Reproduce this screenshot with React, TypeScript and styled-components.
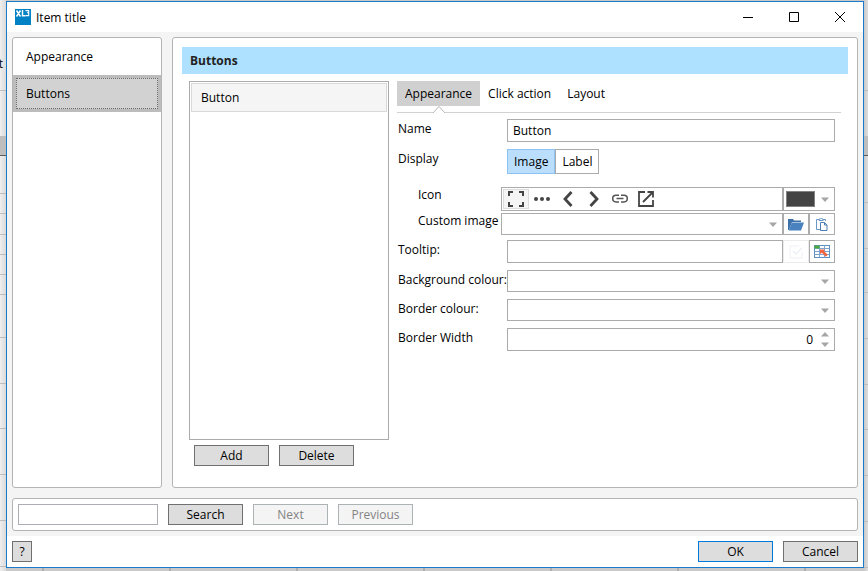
import React, { useState } from "react";
import styled, { createGlobalStyle, css } from "styled-components";

const GlobalStyle = createGlobalStyle`
  *, *::before, *::after { box-sizing: border-box; }
  body { margin: 0; background: #e4e4e4; }
  body, button, input, select {
    font-family: "Open Sans", "Noto Sans", sans-serif;
    font-size: 12px;
    color: #000;
  }
  button, input, select { margin: 0; padding: 0; border-radius: 0; }
`;

const line = "#ababab";
const panelLine = "#b4b4b4";

/* ---------- desktop behind the dialog ---------- */

const Desktop = styled.div`
  display: grid;
  grid-template-columns: 6px minmax(0, 1fr) 4px;
  grid-template-rows: 1px minmax(0, 1fr) 3px;
  min-height: 100vh;
  background: #c9c9c9;
`;

const SheetEdge = styled.div<{ $side: "left" | "right" }>`
  grid-row: 1 / -1;
  grid-column: ${(p) => (p.$side === "left" ? 1 : 3)};
  overflow: hidden;
  line-height: 16px;
  background: ${(p) =>
    p.$side === "left"
      ? "linear-gradient(to right, #efefef, #dadada)"
      : "linear-gradient(to right, #cacaca, #dedede)"};
`;

const SheetCell = styled.div<{ $height: number; $header?: boolean }>`
  display: flex;
  align-items: flex-end;
  justify-content: flex-end;
  height: ${(p) => p.$height}px;
  padding: 0 3px 18px 0;
  border-bottom: ${(p) => (p.$header ? "1px solid #5c5c5c" : "1px solid #bdbdbd")};
  background: ${(p) => (p.$header ? "#bebebe" : "transparent")};
`;

const SheetFooter = styled.div`
  grid-row: 3;
  grid-column: 2;
  background: repeating-linear-gradient(
    to right,
    #c9c9c9 0 36px,
    #adadad 36px 38px,
    #c9c9c9 38px 127px
  );
`;

/* ---------- dialog frame ---------- */

const Dialog = styled.main`
  grid-row: 2;
  grid-column: 2;
  display: flex;
  flex-direction: column;
  border: 1px solid #1979ca;
  background: #fff;
`;

const TitleBar = styled.header`
  display: flex;
  align-items: center;
  height: 30px;
  padding-left: 8px;
`;

const Title = styled.h1`
  flex: 1;
  margin: 0 0 0 5px;
  font-size: 12px;
  font-weight: 400;
`;

const WindowButton = styled.button`
  display: grid;
  place-items: center;
  width: 46px;
  height: 28px;
  border: 0;
  background: transparent;
`;

const Body = styled.div`
  flex: 1;
  display: flex;
  flex-direction: column;
  gap: 10px;
  padding: 5px;
  background: #f4f4f4;
`;

const Columns = styled.div`
  flex: 1;
  display: flex;
  gap: 10px;
`;

const panel = css`
  border: 1px solid ${panelLine};
  border-radius: 3px;
  background: #fff;
`;

const Sidebar = styled.nav`
  ${panel}
  width: 150px;
  flex: none;
`;

const NavItem = styled.button<{ $active: boolean }>`
  display: block;
  width: 100%;
  height: 37px;
  padding: 3px;
  border: 0;
  background: ${(p) => (p.$active ? "#bcbcbc" : "transparent")};
  text-align: left;
`;

const NavLabel = styled.span<{ $active: boolean }>`
  display: flex;
  align-items: center;
  height: 31px;
  padding-left: 9px;
  border: 1px dotted ${(p) => (p.$active ? "#6b6b6b" : "transparent")};
  background: ${(p) => (p.$active ? "#d2d2d2" : "transparent")};
`;

const Content = styled.section`
  ${panel}
  flex: 1;
  min-width: 0;
  display: flex;
  flex-direction: column;
  gap: 7px;
  padding: 9px 9px 21px;
`;

const Banner = styled.h2`
  display: flex;
  align-items: center;
  height: 27px;
  margin: 0;
  padding-left: 8px;
  background: #ade1ff;
  color: #222;
  font-size: 12px;
  font-weight: 700;
`;

const Workspace = styled.div`
  flex: 1;
  display: flex;
  gap: 8px;
  padding: 0 7px;
`;

const ListColumn = styled.div`
  display: flex;
  flex-direction: column;
  gap: 5px;
  width: 200px;
  flex: none;
`;

const ItemList = styled.div`
  flex: 1;
  padding: 1px;
  border: 1px solid ${line};
`;

const ListItem = styled.button`
  width: 100%;
  height: 29px;
  padding-left: 9px;
  border: 1px solid #d9d9d9;
  background: #f5f5f5;
  text-align: left;
`;

const ButtonRow = styled.div`
  display: flex;
  gap: 10px;
  padding-left: 5px;
`;

const PushButton = styled.button<{ $primary?: boolean; $small?: boolean }>`
  width: ${(p) => (p.$small ? 20 : 75)}px;
  height: 21px;
  border: 1px solid ${(p) => (p.$primary ? "#0078d7" : "#707070")};
  background: #ddd;
  line-height: 19px;

  &:disabled {
    border-color: #adb2b5;
    background: #f4f4f4;
    color: #838383;
  }
`;

/* ---------- settings form ---------- */

const Settings = styled.form`
  flex: 1;
  min-width: 0;
`;

const TabBar = styled.div`
  display: flex;
  height: 32px;
  border-bottom: 1px solid #d2d2d2;
  margin-bottom: 6px;
`;

const Tab = styled.button<{ $active: boolean }>`
  position: relative;
  height: 25px;
  padding: 0 8px;
  border: 0;
  background: ${(p) => (p.$active ? "#d0d0d0" : "transparent")};
`;

const TabPointer = styled.svg`
  position: absolute;
  top: 25px;
  left: calc(50% - 6px);
`;

const Row = styled.div<{ $gap: number; $nested?: boolean }>`
  display: grid;
  grid-template-columns: ${(p) => (p.$nested ? 103 : 109)}px minmax(0, 1fr);
  margin: 0 6px ${(p) => p.$gap}px 1px;
`;

const RowLabel = styled.label<{ $nested?: boolean }>`
  padding-left: ${(p) => (p.$nested ? 20 : 0)}px;
  line-height: ${(p) => (p.$nested ? 16 : 20)}px;
  white-space: nowrap;
`;

const TextInput = styled.input`
  width: 100%;
  min-width: 0;
  height: 23px;
  padding: 0 5px;
  border: 1px solid ${line};
  background: #fff;
  outline: 0;
`;

const Group = styled.div`
  display: flex;
`;

const Toggle = styled.button<{ $active: boolean }>`
  height: 25px;
  padding: 0 6px;
  border: 1px solid ${(p) => (p.$active ? "#8dc3f2" : line)};
  background: ${(p) => (p.$active ? "#badefb" : "#fff")};
`;

const IconStrip = styled.div`
  flex: 1;
  display: flex;
  height: 24px;
  padding: 1px;
  border: 1px solid ${line};
`;

const IconOption = styled.button<{ $active: boolean }>`
  display: grid;
  place-items: center;
  width: 26px;
  height: 20px;
  border: 1px solid ${(p) => (p.$active ? "#dcdcdc" : "transparent")};
  background: ${(p) => (p.$active ? "#f5f5f5" : "transparent")};
`;

const ColourButton = styled.button`
  display: flex;
  align-items: center;
  justify-content: space-between;
  width: 52px;
  height: 24px;
  padding: 0 5px 0 2px;
  border: 1px solid ${line};
  background: #fff;
`;

const Swatch = styled.span`
  width: 29px;
  height: 16px;
  border: 1px solid #828282;
  background: #444;
`;

const SelectFrame = styled.div`
  flex: 1;
  display: grid;
  align-items: center;

  > * { grid-area: 1 / 1; }
  > svg { justify-self: end; margin-right: 6px; pointer-events: none; }
`;

const Select = styled.select`
  appearance: none;
  width: 100%;
  height: 22px;
  padding: 0 20px 0 5px;
  border: 1px solid ${line};
  background: #fff;
  outline: 0;
`;

const ToolButton = styled.button<{ $tall?: boolean }>`
  display: grid;
  place-items: center;
  flex: none;
  width: 26px;
  height: ${(p) => (p.$tall ? 23 : 22)}px;
  border: 1px solid ${line};
  background: #fff;

  &:disabled { border-color: #ececec; }
`;

const Spinner = styled.div`
  display: flex;
  height: 23px;
  border: 1px solid ${line};
`;

const SpinInput = styled.input`
  flex: 1;
  min-width: 0;
  padding-right: 3px;
  border: 0;
  outline: 0;
  text-align: right;
`;

const SpinButtons = styled.div`
  display: grid;
  width: 18px;
  padding: 1px 0;
`;

const SpinButton = styled.button`
  display: grid;
  place-items: center;
  border: 0;
  background: transparent;
`;

/* ---------- bottom bars ---------- */

const SearchBar = styled.form`
  ${panel}
  display: flex;
  align-items: flex-start;
  gap: 10px;
  height: 33px;
  padding: 5px;
`;

const SearchInput = styled.input`
  width: 140px;
  height: 21px;
  padding: 0 4px;
  border: 1px solid #abadb3;
  outline: 0;
`;

const Footer = styled.footer`
  display: flex;
  gap: 10px;
  height: 31px;
  padding: 5px;
`;

const Spacer = styled.div`
  flex: 1;
`;

/* ---------- drawings ---------- */

const AppLogo = () => (
  <svg width="16" height="16" viewBox="0 0 16 16" aria-hidden="true">
    <rect width="16" height="16" fill="#0082c4" />
    <path d="M1.500 1.500l4 6M5.500 1.500l-4 6M7.500 1v5.800h3" fill="none" stroke="#fff" strokeWidth="1.500" />
    <path d="M10.500 1.600h3.200v2h-1.500 1.500v3h-3.200" fill="none" stroke="#fff" strokeWidth="1.100" />
  </svg>
);

const Caret = ({ up = false }: { up?: boolean }) => (
  <svg width="8" height="5" viewBox="0 0 8 5" aria-hidden="true">
    <path d={up ? "M0 4.500h8L4 0z" : "M0 0.500h8L4 5z"} fill="#a6a6a6" />
  </svg>
);

const iconShapes: Record<string, React.ReactNode> = {
  Fullscreen: (
    <path d="M2 6V2h4M12 2h4v4M16 12v4h-4M6 16H2v-4" stroke="#444" strokeWidth="2" fill="none" />
  ),
  More: (
    <g fill="#444">
      <circle cx="3" cy="9" r="2" />
      <circle cx="9" cy="9" r="2" />
      <circle cx="15" cy="9" r="2" />
    </g>
  ),
  Back: <path d="M12.500 2L6 9l6.500 7" stroke="#444" strokeWidth="2.800" fill="none" />,
  Forward: <path d="M5.500 2L12 9l-6.500 7" stroke="#444" strokeWidth="2.800" fill="none" />,
  Link: (
    <path
      d="M8 5.300H5a3.300 3.300 0 0 0 0 6.600h3M10 5.300h3a3.300 3.300 0 0 1 0 6.600h-3M5.500 8.600h7"
      stroke="#555"
      strokeWidth="1.500"
      fill="none"
    />
  ),
  Open: (
    <path
      d="M8 2H2v14h14v-6M10.500 2H16v5.500M16 2L6 12"
      stroke="#444"
      strokeWidth="1.800"
      fill="none"
    />
  ),
};

const FolderIcon = () => (
  <svg width="16" height="13" viewBox="0 0 16 13" aria-hidden="true">
    <path d="M0 12V1h5l1 1.500h7V4H4L1 12z" fill="#3d71aa" />
    <path d="M3.800 4.500H16L13 12.500H0.800z" fill="#4a82bf" />
  </svg>
);

const PasteIcon = () => (
  <svg width="12" height="14" viewBox="0 0 12 14" aria-hidden="true">
    <path d="M4 12.500H0.500V2.500h9V4" fill="none" stroke="#6796c4" />
    <path d="M3 3.500V2h1.200a1 1 0 0 1 1.800 0h1.200v1.500z" fill="#fff" stroke="#6796c4" />
    <path d="M4.500 5.500h4l2.500 2.500v5.500H4.500z" fill="#fff" stroke="#4a7fb5" />
    <path d="M8.500 5.500V8H11" fill="none" stroke="#4a7fb5" />
  </svg>
);

const CheckIcon = () => (
  <svg width="14" height="14" viewBox="0 0 14 14" fill="none" stroke="#edf0f5" aria-hidden="true">
    <path d="M10 1H1v12h12V7" />
    <path d="M4 6l3 3 6-6" strokeWidth="1.500" />
  </svg>
);

const SheetIcon = () => (
  <svg width="16" height="13" viewBox="0 0 16 13" aria-hidden="true">
    <rect x="0.500" y="0.500" width="15" height="12" fill="#fff" stroke="#5a8fc4" />
    <path d="M0.500 3.500h15M0.500 6.500h15M0.500 9.500h15M5.500 0.500v12M10.500 0.500v12" stroke="#7ba5d0" />
    <rect x="0.500" y="0.500" width="5" height="3" fill="#4cab3c" />
    <path d="M6 4.500h5L9.800 5.900l4 3.900-1.900 1.900-4-4L6 9z" fill="#f4633e" />
  </svg>
);

const leftCells = [91, 46, 19, 38, 20, 21, 20, 20, 20, 43, 46, 45, 46, 46, 46];
const rightCells = [91, 46, 19, 47, 46, 44, 46, 46, 45, 46, 46, 46];
const sections = ["Appearance", "Buttons"];
const tabs = ["Appearance", "Click action", "Layout"];
const displays = ["Image", "Label"];

export default function App() {
  const [section, setSection] = useState("Buttons");
  const [tab, setTab] = useState("Appearance");
  const [display, setDisplay] = useState("Image");
  const [icon, setIcon] = useState("Fullscreen");
  const [name, setName] = useState("Button");
  const [borderWidth, setBorderWidth] = useState("0");
  const step = (by: number) =>
    setBorderWidth((value) => String(Math.max(0, (Number(value) || 0) + by)));

  return (
    <>
      <GlobalStyle />
      <Desktop>
        <SheetEdge $side="left">
          {leftCells.map((height, i) => (
            <SheetCell key={i} $height={height} $header={i === 2}>
              {i === 0 ? "t" : null}
            </SheetCell>
          ))}
        </SheetEdge>
        <Dialog>
          <TitleBar>
            <AppLogo />
            <Title>Item title</Title>
            <WindowButton type="button" aria-label="Minimise">
              <svg width="10" height="10"><path d="M0 5.500h10" stroke="#000" /></svg>
            </WindowButton>
            <WindowButton type="button" aria-label="Maximise">
              <svg width="10" height="10"><path d="M0.500 0.500h9v9h-9z" fill="none" stroke="#000" /></svg>
            </WindowButton>
            <WindowButton type="button" aria-label="Close">
              <svg width="10" height="10"><path d="M0 0l10 10M10 0L0 10" stroke="#000" /></svg>
            </WindowButton>
          </TitleBar>

          <Body>
            <Columns>
              <Sidebar>
                {sections.map((item) => (
                  <NavItem key={item} type="button" $active={item === section} onClick={() => setSection(item)}>
                    <NavLabel $active={item === section}>{item}</NavLabel>
                  </NavItem>
                ))}
              </Sidebar>

              <Content>
                <Banner>Buttons</Banner>
                <Workspace>
                  <ListColumn>
                    <ItemList>
                      <ListItem type="button">{name}</ListItem>
                    </ItemList>
                    <ButtonRow>
                      <PushButton type="button">Add</PushButton>
                      <PushButton type="button">Delete</PushButton>
                    </ButtonRow>
                  </ListColumn>

                  <Settings onSubmit={(e) => e.preventDefault()}>
                    <TabBar role="tablist">
                      {tabs.map((item) => (
                        <Tab
                          key={item}
                          type="button"
                          role="tab"
                          aria-selected={item === tab}
                          $active={item === tab}
                          onClick={() => setTab(item)}
                        >
                          {item}
                          {item === tab && (
                            <TabPointer width="12" height="8" viewBox="0 0 12 8">
                              <path d="M0 7L6 0.500l6 6.500v1H0z" fill="#fff" />
                              <path d="M0 7L6 0.500L12 7" fill="none" stroke="#b8b8b8" />
                            </TabPointer>
                          )}
                        </Tab>
                      ))}
                    </TabBar>

                    <Row $gap={7}>
                      <RowLabel htmlFor="name">Name</RowLabel>
                      <TextInput id="name" value={name} onChange={(e) => setName(e.target.value)} />
                    </Row>
                    <Row $gap={13}>
                      <RowLabel as="span" id="display">Display</RowLabel>
                      <Group role="group" aria-labelledby="display">
                        {displays.map((item) => (
                          <Toggle
                            key={item}
                            type="button"
                            aria-pressed={item === display}
                            $active={item === display}
                            onClick={() => setDisplay(item)}
                          >
                            {item}
                          </Toggle>
                        ))}
                      </Group>
                    </Row>
                    <Row $gap={2} $nested>
                      <RowLabel as="span" id="icon" $nested>Icon</RowLabel>
                      <Group role="group" aria-labelledby="icon">
                        <IconStrip>
                          {Object.entries(iconShapes).map(([key, shape]) => (
                            <IconOption
                              key={key}
                              type="button"
                              aria-label={key}
                              $active={key === icon}
                              onClick={() => setIcon(key)}
                            >
                              <svg width="18" height="18" viewBox="0 0 18 18">{shape}</svg>
                            </IconOption>
                          ))}
                        </IconStrip>
                        <ColourButton type="button" aria-label="Icon colour">
                          <Swatch />
                          <Caret />
                        </ColourButton>
                      </Group>
                    </Row>
                    <Row $gap={5} $nested>
                      <RowLabel htmlFor="custom" $nested>Custom image</RowLabel>
                      <Group>
                        <SelectFrame>
                          <Select id="custom"><option value="" /></Select>
                          <Caret />
                        </SelectFrame>
                        <ToolButton type="button" aria-label="Browse"><FolderIcon /></ToolButton>
                        <ToolButton type="button" aria-label="Paste"><PasteIcon /></ToolButton>
                      </Group>
                    </Row>
                    <Row $gap={7}>
                      <RowLabel htmlFor="tooltip">Tooltip:</RowLabel>
                      <Group>
                        <TextInput id="tooltip" />
                        <ToolButton type="button" $tall disabled aria-label="Apply"><CheckIcon /></ToolButton>
                        <ToolButton type="button" $tall aria-label="Pick cell"><SheetIcon /></ToolButton>
                      </Group>
                    </Row>
                    <Row $gap={7}>
                      <RowLabel htmlFor="background">Background colour:</RowLabel>
                      <SelectFrame>
                        <Select id="background"><option value="" /></Select>
                        <Caret />
                      </SelectFrame>
                    </Row>
                    <Row $gap={7}>
                      <RowLabel htmlFor="border">Border colour:</RowLabel>
                      <SelectFrame>
                        <Select id="border"><option value="" /></Select>
                        <Caret />
                      </SelectFrame>
                    </Row>
                    <Row $gap={0}>
                      <RowLabel htmlFor="width">Border Width</RowLabel>
                      <Spinner>
                        <SpinInput
                          id="width"
                          inputMode="numeric"
                          value={borderWidth}
                          onChange={(e) => setBorderWidth(e.target.value)}
                        />
                        <SpinButtons>
                          <SpinButton type="button" aria-label="Increase" onClick={() => step(1)}><Caret up /></SpinButton>
                          <SpinButton type="button" aria-label="Decrease" onClick={() => step(-1)}><Caret /></SpinButton>
                        </SpinButtons>
                      </Spinner>
                    </Row>
                  </Settings>
                </Workspace>
              </Content>
            </Columns>

            <SearchBar onSubmit={(e) => e.preventDefault()}>
              <SearchInput aria-label="Search text" />
              <PushButton type="submit">Search</PushButton>
              <PushButton type="button" disabled>Next</PushButton>
              <PushButton type="button" disabled>Previous</PushButton>
            </SearchBar>
          </Body>

          <Footer>
            <PushButton type="button" $small>?</PushButton>
            <Spacer />
            <PushButton type="button" $primary>OK</PushButton>
            <PushButton type="button">Cancel</PushButton>
          </Footer>
        </Dialog>
        <SheetEdge $side="right">
          {rightCells.map((height, i) => (
            <SheetCell key={i} $height={height} $header={i === 2} />
          ))}
        </SheetEdge>
        <SheetFooter />
      </Desktop>
    </>
  );
}
